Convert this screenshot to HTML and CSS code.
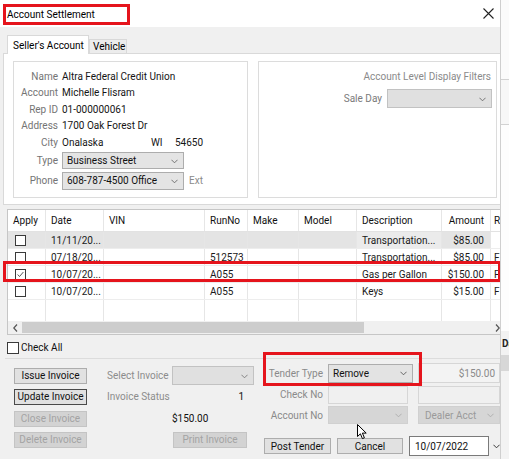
FILE: index.html
```html
<!DOCTYPE html>
<html>
<head>
<meta charset="utf-8">
<link rel="stylesheet" href="styles.css">
</head>
<body>
<div class="screen">
  <div class="dialog">
    <div class="titlebar">
      <div class="title-mark">Account Settlement</div>
      <svg class="close" viewBox="0 0 11 11"><path d="M0.5 0.5L10.5 10.5M10.5 0.5L0.5 10.5" stroke="#222" stroke-width="1.1" fill="none"/></svg>
    </div>
    <div class="tabstrip">
      <div class="tab active">Seller's Account</div>
      <div class="tab">Vehicle</div>
    </div>
    <div class="tabpanel">
      <div class="group info">
        <span class="lbl">Name</span><span class="val">Altra Federal Credit Union</span>
        <span class="lbl">Account</span><span class="val">Michelle Flisram</span>
        <span class="lbl">Rep ID</span><span class="val">01-000000061</span>
        <span class="lbl">Address</span><span class="val">1700 Oak Forest Dr</span>
        <span class="lbl">City</span><span class="val"><span class="city">Onalaska</span><span class="state">WI</span><span>54650</span></span>
        <span class="lbl">Type</span><span class="val"><span class="combo w122 h17">Business Street<svg class="chev" viewBox="0 0 8 5"><path d="M0.5 0.5L4 4L7.5 0.5" stroke="#666" fill="none"/></svg></span></span>
        <span class="lbl">Phone</span><span class="val"><span class="combo w122 h18">608-787-4500 Office<svg class="chev" viewBox="0 0 8 5"><path d="M0.5 0.5L4 4L7.5 0.5" stroke="#666" fill="none"/></svg></span><span class="ext">Ext</span></span>
      </div>
      <div class="group filters">
        <div class="ftitle">Account Level Display Filters</div>
        <div class="saleday"><span class="lbl">Sale Day</span><span class="combo w105 h19 dis-combo"><svg class="chev" viewBox="0 0 8 5"><path d="M0.5 0.5L4 4L7.5 0.5" stroke="#666" fill="none"/></svg></span></div>
      </div>
    </div>

    <div class="gridwrap">
      <div class="grow head">
        <span class="c">Apply</span><span class="c">Date</span><span class="c">VIN</span><span class="c">RunNo</span><span class="c">Make</span><span class="c">Model</span><span class="c">Description</span><span class="c r">Amount</span><span class="c rr">R</span>
      </div>
      <div class="grow sel">
        <span class="c"><span class="cb"></span></span><span class="c">11/11/20...</span><span class="c"></span><span class="c"></span><span class="c"></span><span class="c"></span><span class="c cur">Transportation...</span><span class="c r">$85.00</span><span class="c rr"></span>
      </div>
      <div class="grow">
        <span class="c"><span class="cb"></span></span><span class="c">07/18/20...</span><span class="c"></span><span class="c">512573</span><span class="c"></span><span class="c"></span><span class="c">Transportation...</span><span class="c r">$85.00</span><span class="c rr">F</span>
      </div>
      <div class="grow">
        <span class="c"><span class="cb"><svg viewBox="0 0 11 11"><path d="M2 5.5L4.3 8L9 2.5" stroke="#333" stroke-width="1" fill="none"/></svg></span></span><span class="c">10/07/20...</span><span class="c"></span><span class="c">A055</span><span class="c"></span><span class="c"></span><span class="c">Gas per Gallon</span><span class="c r">$150.00</span><span class="c rr">F</span>
      </div>
      <div class="grow">
        <span class="c"><span class="cb"></span></span><span class="c">10/07/20...</span><span class="c"></span><span class="c">A055</span><span class="c"></span><span class="c"></span><span class="c">Keys</span><span class="c r">$15.00</span><span class="c rr">F</span>
      </div>
      <div class="grow filler">
        <span class="c"></span><span class="c"></span><span class="c"></span><span class="c"></span><span class="c"></span><span class="c"></span><span class="c"></span><span class="c"></span><span class="c rr"></span>
      </div>
      <div class="hscroll">
        <svg class="arr" viewBox="0 0 5 8"><path d="M4 0.5L0.8 4L4 7.5" stroke="#555" stroke-width="1.2" fill="none"/></svg>
        <div class="thumb"></div>
        <svg class="arr right" viewBox="0 0 5 8"><path d="M1 0.5L4.2 4L1 7.5" stroke="#555" stroke-width="1.2" fill="none"/></svg>
      </div>
      <div class="row-mark"></div>
    </div>

    <div class="checkall"><span class="cb big"></span>Check All</div>

    <div class="bottom">
      <div class="invoice">
        <span class="btn">Issue Invoice</span>
        <span class="glbl">Select Invoice</span>
        <span class="combo w82 h19 dis-combo"><svg class="chev" viewBox="0 0 8 5"><path d="M0.5 0.5L4 4L7.5 0.5" stroke="#777" fill="none"/></svg></span>

        <span class="btn focus">Update Invoice</span>
        <span class="glbl">Invoice Status</span>
        <span class="status">1</span>

        <span class="btn disabled">Close Invoice</span>
        <span></span>
        <span class="amt">$150.00</span>

        <span class="btn disabled">Delete Invoice</span>
        <span></span>
        <span class="btn disabled print">Print Invoice</span>
      </div>
      <div class="tender">
        <div class="tgrid">
          <span class="tlbl">Tender Type</span>
          <span class="combo w85 h19 tcombo">Remove<svg class="chev" viewBox="0 0 8 5"><path d="M0.5 0.5L4 4L7.5 0.5" stroke="#555" fill="none"/></svg></span>
          <span class="tbox h20 money">$150.00</span>

          <span class="tlbl">Check No</span>
          <span class="tbox w80 h18"></span>
          <span class="tbox h18"></span>

          <span class="tlbl">Account No</span>
          <span class="combo w80 h18 off"><svg class="chev" viewBox="0 0 8 5"><path d="M0.5 0.5L4 4L7.5 0.5" stroke="#aaa" fill="none"/></svg></span>
          <span class="combo h18 off dealer">Dealer Acct<svg class="chev" viewBox="0 0 8 5"><path d="M0.5 0.5L4 4L7.5 0.5" stroke="#aaa" fill="none"/></svg></span>
        </div>
        <div class="actions">
          <span class="btn post">Post Tender</span>
          <span class="btn cancel">Cancel</span>
          <span class="datebox">10/07/2022</span>
          <svg class="dchev" viewBox="0 0 8 5"><path d="M0.5 0.5L4 4L7.5 0.5" stroke="#333" stroke-width="1.1" fill="none"/></svg>
        </div>
      </div>
      <div class="tender-mark"></div>
      <svg class="cursor" viewBox="0 0 11 16"><path d="M0.5 0.5L0.5 12.5L3.4 9.8L5.4 14.6L7.4 13.8L5.4 9.1L9.2 9.1Z" fill="#fff" stroke="#000" stroke-width="1" stroke-linejoin="round"/></svg>
    </div>
  </div>
  <div class="backapp">
    <div class="ba-top"></div>
    <div class="ba-mid"></div>
    <div class="ba-low"></div>
    <div class="ba-head">Da</div>
    <div class="ba-band"></div>
    <div class="ba-rest"></div>
  </div>
</div>
</body>
</html>
```
FILE: styles.css
```css
* { box-sizing: border-box; }
body {
  margin: 0;
  font-family: Roboto, "Liberation Sans", Arial, sans-serif;
  font-size: 10px;
  color: #111;
}
.screen {
  display: flex;
  width: 509px;
  height: 459px;
  overflow: hidden;
  background: #f6f6f6;
}
.dialog {
  width: 501px;
  flex: none;
  background: #f0f0f0;
  border-right: 1px solid #cfcfcf;
  position: relative;
  overflow: hidden;
  display: flex;
  flex-direction: column;
}
.titlebar {
  height: 27px;
  flex: none;
  background: #fff;
  display: flex;
  justify-content: space-between;
  align-items: flex-start;
  padding: 4px 6px 0 3px;
}
.title-mark {
  width: 127px;
  height: 21px;
  border: 3px solid #e5141c;
  display: flex;
  align-items: center;
  padding-left: 1px;
  color: #000;
}
.close { width: 11px; height: 11px; margin-top: 4px; }

.tabstrip {
  height: 26px;
  flex: none;
  display: flex;
  align-items: flex-end;
  padding-left: 7px;
}
.tab {
  height: 14px;
  width: 38px;
  padding-left: 3px;
  border: 1px solid #d9d9d9;
  border-bottom: none;
  background: #ececec;
  display: flex;
  align-items: center;
  color: #000;
}
.tab.active {
  height: 19px;
  width: 82px;
  padding-left: 5px;
  background: #fff;
  margin-bottom: -1px;
  position: relative;
  z-index: 1;
}

.tabpanel {
  margin-left: 3px;
  width: 497px;
  height: 152px;
  flex: none;
  background: #fff;
  border: 1px solid #d9d9d9;
  border-right: none;
  display: flex;
  gap: 10px;
  padding: 7px 0 6px 9px;
}
.group {
  border: 1px solid #dcdcdc;
  height: 137px;
}
.info {
  width: 235px;
  display: grid;
  grid-template-columns: 44px 1fr;
  grid-template-rows: 16.5px 16.5px 16.5px 16.5px 16.5px 20px 20px;
  column-gap: 4px;
  padding-top: 6px;
  align-items: center;
  align-content: start;
}
.lbl { color: #747474; text-align: right; white-space: nowrap; }
.val { color: #151515; white-space: nowrap; display: flex; align-items: center; }
.city { width: 89px; }
.state { width: 24px; }
.ext { color: #8a8a8a; margin-left: 5px; }

.combo {
  position: relative;
  display: flex;
  align-items: center;
  padding-left: 4px;
  background: #e4e4e4;
  border: 1px solid #adadad;
  color: #111;
  white-space: nowrap;
}
.chev {
  position: absolute;
  right: 5px;
  top: 50%;
  width: 7px;
  height: 5px;
  margin-top: -2px;
}
.w122 { width: 122px; }
.w105 { width: 105px; }
.w85 { width: 85px; }
.w82 { width: 82px; }
.w80 { width: 80px; }
.h17 { height: 17px; }
.h18 { height: 18px; }
.h19 { height: 19px; }
.h20 { height: 20px; }
.dis-combo { background: #e0e0e0; border-color: #c2c2c2; }

.filters {
  width: 239px;
  display: flex;
  flex-direction: column;
  align-items: flex-end;
  padding: 8px 4px 0 0;
}
.ftitle { color: #8a8a8a; line-height: 14px; padding-right: 1px; }
.saleday { display: flex; align-items: center; gap: 5px; margin-top: 5px; }
.saleday .lbl { color: #7a7a7a; }

/* data grid */
.gridwrap {
  margin: 4px 0 0 7px;
  width: 493px;
  height: 126px;
  flex: none;
  border: 1px solid #c6c6c6;
  border-right: none;
  background: #fff;
  position: relative;
}
.grow {
  display: grid;
  grid-template-columns: 38px 58px 101px 43px 51px 58px 85px 49px 30px;
  height: 17px;
  border-bottom: 1px solid #ededed;
  white-space: nowrap;
}
.grow.head { height: 22px; border-bottom: 1px solid #e2e2e2; }
.grow.filler { height: 21px; border-bottom: none; }
.c {
  display: flex;
  align-items: center;
  padding-left: 5px;
  border-right: 1px solid #e6e6e6;
  overflow: hidden;
  color: #1a1a1a;
}
.head .c { color: #111; padding-left: 5px; }
.c.r { justify-content: flex-end; padding-left: 0; padding-right: 6px; }
.c.rr { padding-left: 3px; border-right: none; }
.grow.sel .c { background: #e4e4e4; }
.grow.sel .c.cur { background: #ebebeb; }
.grow.sel .c.rr { background: #fff; }
.c .cb { margin-left: 2px; }
.cb {
  width: 11px;
  height: 11px;
  border: 1px solid #3a3a3a;
  background: #fff;
  display: inline-flex;
  flex: none;
}
.cb svg { width: 9px; height: 9px; }
.hscroll {
  height: 13px;
  background: #f0f0f0;
  position: relative;
  display: flex;
  align-items: center;
}
.arr { width: 5px; height: 8px; margin-left: 5px; }
.arr.right { position: absolute; left: 487px; margin: 0; }
.thumb {
  position: absolute;
  left: 14px;
  top: 1px;
  width: 342px;
  height: 11px;
  background: #cdcdcd;
}
.row-mark {
  position: absolute;
  left: -5px;
  top: 51px;
  width: 498px;
  height: 21px;
  border: 3px solid #e5141c;
}

.checkall {
  height: 23px;
  flex: none;
  display: flex;
  align-items: center;
  padding: 2px 0 0 7px;
  color: #111;
}
.cb.big { width: 12px; height: 12px; margin-right: 2px; }

/* bottom */
.bottom {
  flex: 1;
  margin-left: 5px;
  border-top: 1px solid #dcdcdc;
  position: relative;
  display: flex;
}
.invoice {
  width: 253px;
  flex: none;
  display: grid;
  grid-template-columns: 93px 65px 82px;
  grid-template-rows: 19px 23px 21px 21px;
  align-items: center;
  align-content: start;
  padding: 7px 0 0 9px;
}
.btn {
  height: 16px;
  width: 73px;
  display: flex;
  align-items: center;
  justify-content: center;
  background: #e1e1e1;
  border: 1px solid #adadad;
  color: #111;
  white-space: nowrap;
}
.btn.focus { border-color: #4a4a4a; }
.btn.disabled { background: #d3d3d3; border-color: #c4c4c4; color: #a3a3a3; }
.btn.print { width: 74px; margin-left: 1px; }
.glbl { color: #8c8c8c; white-space: nowrap; }
.status { text-align: right; padding-right: 10px; }
.amt { color: #111; }

.tender {
  flex: 1;
  display: flex;
  flex-direction: column;
  padding-top: 3px;
}
.tgrid {
  display: grid;
  grid-template-columns: 70px 90px 82px;
  grid-template-rows: 22px 21px 20px;
  align-items: center;
}
.tlbl { color: #8a8a8a; text-align: right; padding-right: 5px; white-space: nowrap; }
.tcombo { background: #e3e3e3; color: #111; }
.tbox {
  background: #f0f0f0;
  border: 1px solid #d6d6d6;
  width: 82px;
  display: flex;
  align-items: center;
}
.tbox.w80 { width: 80px; }
.tbox.money { justify-content: flex-end; padding-right: 4px; color: #8a8a8a; background: #f3f3f3; }
.combo.off { background: #d6d6d6; border-color: #d0d0d0; color: #9a9a9a; }
.combo.dealer { width: 82px; padding-left: 6px; }
.actions {
  display: flex;
  align-items: center;
  gap: 6px;
  margin: 11px 0 0 6px;
  height: 20px;
}
.btn.post { width: 67px; }
.btn.cancel { width: 66px; }
.datebox {
  width: 80px;
  height: 20px;
  background: #fff;
  border: 1px solid #7a7a7a;
  display: flex;
  align-items: center;
  padding-left: 5px;
  color: #111;
}
.dchev { width: 7px; height: 5px; margin-left: -2px; }
.tender-mark {
  position: absolute;
  left: 258px;
  top: -7px;
  width: 159px;
  height: 34px;
  border: 3px solid #e5141c;
}
.cursor {
  position: absolute;
  left: 352px;
  top: 65px;
  width: 11px;
  height: 16px;
}

/* background application */
.backapp {
  flex: 1;
  display: flex;
  flex-direction: column;
  background: #f7f7f7;
  overflow: hidden;
}
.ba-top { height: 80px; border-bottom: 1px solid #d2d2d2; background: #fbfbfb; }
.ba-mid { height: 45px; border-bottom: 1px solid #d2d2d2; }
.ba-low { height: 206px; background: #fdfdfd; }
.ba-head { height: 24px; font-weight: bold; padding-left: 1px; display: flex; align-items: center; color: #222; background: #f2f2f2; white-space: nowrap; }
.ba-band { height: 16px; background: #d7d7d7; }
.ba-rest { flex: 1; background: #f3f3f3; }
```
